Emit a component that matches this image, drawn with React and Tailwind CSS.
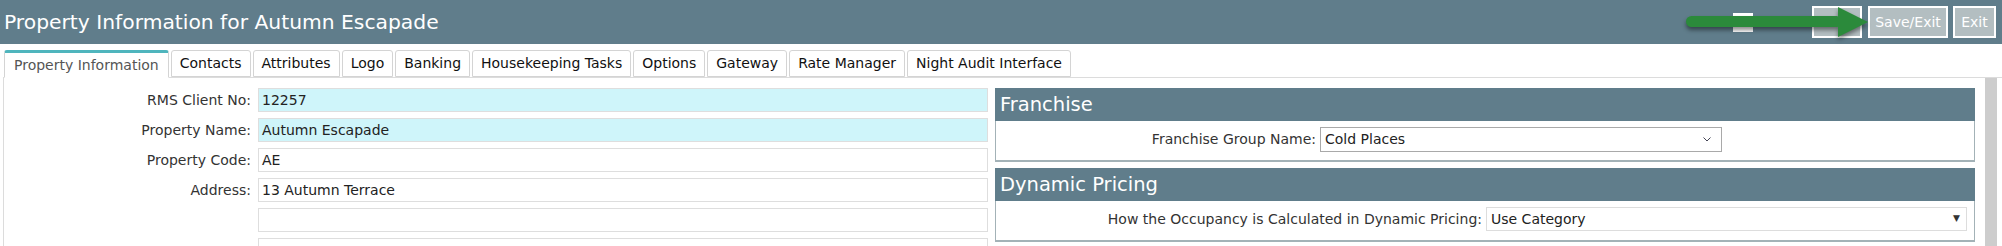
const tabs = [
  'Property Information',
  'Contacts',
  'Attributes',
  'Logo',
  'Banking',
  'Housekeeping Tasks',
  'Options',
  'Gateway',
  'Rate Manager',
  'Night Audit Interface',
]

const fields = [
  { label: 'RMS Client No:', value: '12257', locked: true },
  { label: 'Property Name:', value: 'Autumn Escapade', locked: true },
  { label: 'Property Code:', value: 'AE' },
  { label: 'Address:', value: '13 Autumn Terrace' },
  { label: '', value: '' },
  { label: '', value: '' },
]

const PanelHeader = ({ title }) => (
  <div className="h-[33px] bg-[#607d8b] text-white text-[19.5px] pl-[5px] flex items-center">
    {title}
  </div>
)

const App = () => {
  return (
    <div className="w-[2002px] h-[246px] bg-white overflow-hidden relative font-['DejaVu_Sans',sans-serif] text-[14px]">
      {/* Top bar */}
      <div className="h-[44px] bg-[#607d8b] flex items-center pl-[4px] pr-[6px]">
        <h1 className="text-[20.3px] text-white">Property Information for Autumn Escapade</h1>
        <div className="ml-auto flex items-center">
          <div className="w-[20px] h-[19px] bg-white" />
          <span className="ml-[5px] text-white">Scroll</span>
          <div className="ml-[16px] w-[50px] h-[32px] border-2 border-white bg-[#b3bec1]" />
          <button className="ml-[6px] w-[80px] h-[32px] border-2 border-white bg-[#b3bec1] text-white">
            Save/Exit
          </button>
          <button className="ml-[5px] w-[43px] h-[32px] border-2 border-white bg-[#b3bec1] text-white">
            Exit
          </button>
        </div>
      </div>

      {/* Pointer arrow */}
      <svg
        className="absolute left-[1686px] top-[5px] drop-shadow-[0_3px_2px_rgba(0,0,0,0.45)]"
        width="185"
        height="36"
        viewBox="0 0 185 36"
      >
        <rect x="0" y="11" width="156" height="11" rx="5.5" fill="#2b8a3b" />
        <polygon points="152,2 182,17 152,32" fill="#2b8a3b" />
      </svg>

      {/* Tabs */}
      <div className="mt-[6px] pl-[4px] flex gap-[2px] h-[28px] relative z-10">
        {tabs.map((tab, i) =>
          i === 0 ? (
            <div
              key={tab}
              className="h-[28px] px-[9px] bg-white border border-[#d4d4d4] border-t-[3px] border-t-[#4fb5bd] border-b-white rounded-t-[3px] text-[#555] flex items-center"
            >
              {tab}
            </div>
          ) : (
            <div
              key={tab}
              className="h-[27px] px-[8px] bg-white border border-[#d4d4d4] rounded-t-[3px] text-[#111] flex items-center"
            >
              {tab}
            </div>
          )
        )}
      </div>

      {/* Content */}
      <div className="ml-[3px] -mt-px border-t border-l border-[#dcdcdc] flex h-[200px]">
        <div className="w-[985px] pt-[10px]">
          {fields.map((f, i) => (
            <div key={i} className="flex items-center h-[24px] mb-[6px]">
              <div className="w-[247px] text-right text-[#333]">{f.label}</div>
              <div
                className={`ml-[7px] w-[730px] h-[24px] border border-[#dedede] pl-[3px] flex items-center text-[#222] ${
                  f.locked ? 'bg-[#cff5fa]' : 'bg-white'
                }`}
              >
                {f.value}
              </div>
            </div>
          ))}
        </div>

        <div className="ml-[6px] w-[980px] pt-[10px]">
          {/* Franchise */}
          <PanelHeader title="Franchise" />
          <div className="h-[41px] pt-[6px] border-x border-b-2 border-[#a3b2b7] flex items-start">
            <div className="w-[320px] h-[25px] flex items-center justify-end text-[#333]">
              Franchise Group Name:
            </div>
            <div className="ml-[4px] w-[402px] h-[25px] border border-[#a9a9a9] bg-white pl-[4px] pr-[10px] flex items-center text-[#222]">
              Cold Places
              <svg className="ml-auto" width="8" height="5" viewBox="0 0 8 5">
                <path d="M0.5 0.5 L4 4 L7.5 0.5" fill="none" stroke="#445" strokeWidth="1" />
              </svg>
            </div>
          </div>

          {/* Dynamic Pricing */}
          <div className="mt-[6px]">
            <PanelHeader title="Dynamic Pricing" />
            <div className="h-[41px] pt-[6px] border-x border-b-2 border-[#a3b2b7] flex items-start">
              <div className="w-[486px] h-[24px] flex items-center justify-end text-[#333]">
                How the Occupancy is Calculated in Dynamic Pricing:
              </div>
              <div className="ml-[4px] w-[481px] h-[24px] border border-[#dddddd] bg-white pl-[4px] pr-[6px] flex items-center text-[#222]">
                Use Category
                <span className="ml-auto text-[9px] text-[#333]">▼</span>
              </div>
            </div>
          </div>
        </div>

        {/* Scrollbar */}
        <div className="ml-[10px] w-[12px] bg-[#cdcdcd]" />
      </div>
    </div>
  )
}

export default App
